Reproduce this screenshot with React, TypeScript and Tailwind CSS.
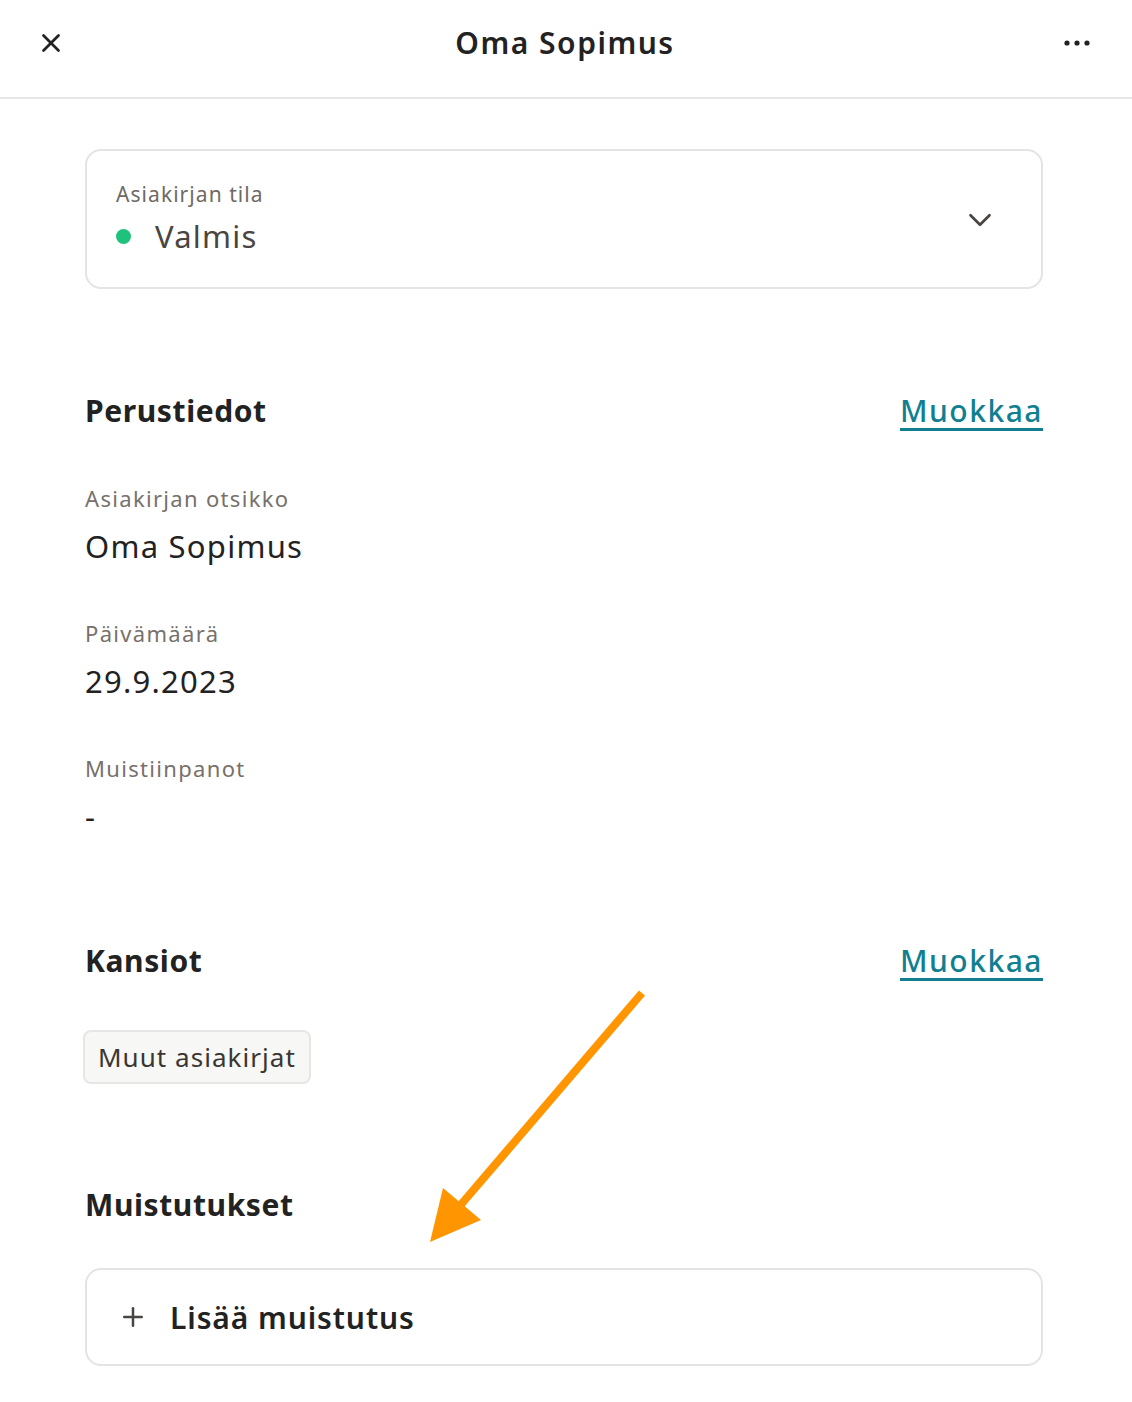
import { X, ChevronDown, Plus } from "lucide-react";

const font = { fontFamily: '"Noto Sans", "Open Sans", sans-serif' };

function Field({ label, value, first }: { label: string; value: string; first?: boolean }) {
  return (
    <div className={first ? "mt-[54px]" : "mt-[53px]"}>
      <div className="text-[22px] leading-[28px] tracking-[0.06em] text-[#77716c]">{label}</div>
      <div className="mt-[14px] text-[31px] leading-[40px] tracking-[0.04em] text-[#222]">{value}</div>
    </div>
  );
}

function SectionHeader({ title, link }: { title: string; link?: boolean }) {
  return (
    <div className="flex h-[40px] items-center justify-between">
      <h2 className="text-[30px] font-bold tracking-[0.02em] text-[#222]">{title}</h2>
      {link && (
        <a className="text-[30px] font-medium tracking-[0.05em] text-[#127f91] underline decoration-[3px] underline-offset-[6px]">
          Muokkaa
        </a>
      )}
    </div>
  );
}

export default function App() {
  return (
    <div className="relative min-h-[1402px] w-[1132px] bg-white" style={font}>
      <header className="flex h-[99px] items-center justify-between border-b-2 border-[#e6e6e6] pb-[12px] pl-[36px] pr-[42px]">
        <X size={30} strokeWidth={2.2} className="text-[#222]" />
        <h1 className="text-[30px] font-semibold tracking-[0.05em] text-[#222]">Oma Sopimus</h1>
        <svg width="26" height="8" viewBox="0 0 26 8" className="text-[#222]">
          <circle cx="3" cy="4" r="2.6" fill="currentColor" />
          <circle cx="13" cy="4" r="2.6" fill="currentColor" />
          <circle cx="23" cy="4" r="2.6" fill="currentColor" />
        </svg>
      </header>

      <main className="pl-[85px] pr-[89px]">
        <div className="mt-[50px] flex h-[140px] items-start justify-between rounded-[16px] border-2 border-[#e4e4e4] pl-[29px] pr-[42px] pt-[31px]">
          <div>
            <div className="text-[21px] leading-[24px] tracking-[0.05em] text-[#6f6964]">Asiakirjan tila</div>
            <div className="mt-[10px] flex items-center gap-[24px]">
              <span className="h-[15px] w-[15px] rounded-full bg-[#1ec27d]" />
              <span className="text-[31px] leading-[40px] tracking-[0.04em] text-[#4a4541]">Valmis</span>
            </div>
          </div>
          <ChevronDown size={38} strokeWidth={1.7} className="mt-[19px] text-[#4a4541]" />
        </div>

        <div className="mt-[101px]">
          <SectionHeader title="Perustiedot" link />
        </div>
        <Field label="Asiakirjan otsikko" value="Oma Sopimus" first />
        <Field label="Päivämäärä" value="29.9.2023" />
        <Field label="Muistiinpanot" value="-" />

        <div className="mt-[104px]">
          <SectionHeader title="Kansiot" link />
        </div>
        <div className="-ml-[2px] mt-[50px] inline-flex h-[54px] items-center rounded-[8px] border-2 border-[#e6e6e4] bg-[#f7f7f5] px-[13px] text-[26px] tracking-[0.04em] text-[#3a3633]">
          Muut asiakirjat
        </div>

        <div className="mt-[100px]">
          <SectionHeader title="Muistutukset" />
        </div>
        <button
          type="button"
          className="mt-[44px] flex h-[98px] w-full items-center gap-[22px] rounded-[16px] border-2 border-[#e4e4e4] px-[31px] text-left"
        >
          <Plus size={30} strokeWidth={2} className="text-[#4a4541]" />
          <span className="text-[30px] font-semibold tracking-[0.03em] text-[#222]">Lisää muistutus</span>
        </button>
      </main>

      <svg className="pointer-events-none absolute left-0 top-0" width="1132" height="1402">
        <line x1="642" y1="993" x2="458" y2="1208" stroke="#ff9500" strokeWidth="8" />
        <polygon points="430,1242 443,1188 481,1220" fill="#ff9500" />
      </svg>
    </div>
  );
}
